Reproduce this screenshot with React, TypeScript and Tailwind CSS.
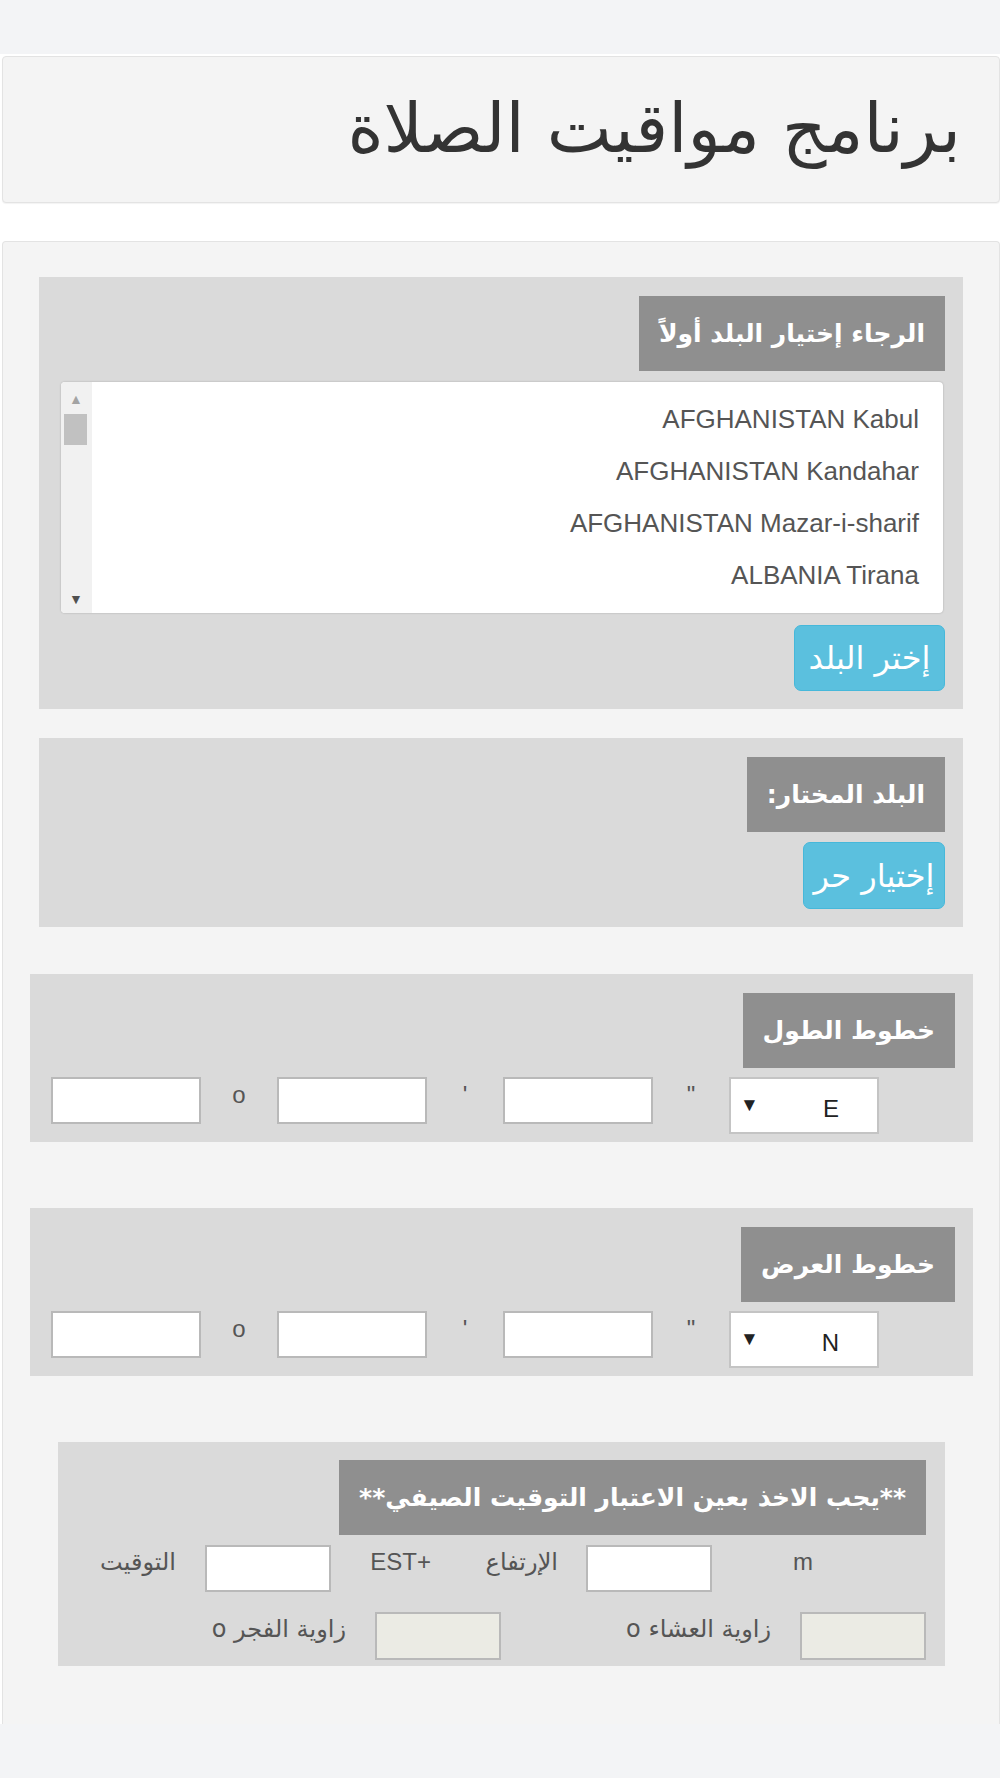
import React from 'react';

const arFont = "font-['DejaVu_Sans',sans-serif]";
const latFont = "font-['Liberation_Sans',Arial,sans-serif]";

const Label = ({ text }: { text: string }) => (
  <div className={`inline-flex h-[75px] items-center bg-[#8f8f8f] px-[20px] text-[25px] font-bold text-white ${arFont}`}>
    {text}
  </div>
);

const InfoButton = ({ text, w, h }: { text: string; w: string; h: string }) => (
  <button className={`${w} ${h} rounded-[7px] border border-[#46b8da] bg-[#5bc0de] text-[32px] text-white ${arFont}`}>
    {text}
  </button>
);

const Field = ({ disabled = false, w = 'w-[150px]', h = 'h-[47px]' }: { disabled?: boolean; w?: string; h?: string }) => (
  <div className={`${w} ${h} shrink-0 border-2 border-[#b9b9b9] ${disabled ? 'bg-[#ebebe4]' : 'bg-white'}`} />
);

const Sym = ({ s }: { s: string }) => (
  <div className={`w-[76px] shrink-0 text-center text-[24px] leading-[36px] text-[#555] ${latFont}`}>{s}</div>
);

const Compass = ({ dir }: { dir: string }) => (
  <div className={`relative h-[57px] w-[150px] shrink-0 border-2 border-[#c4c4c4] bg-white ${latFont}`}>
    <span className="absolute left-[9px] top-[12px] text-[19px] text-[#222]">▼</span>
    <span className="absolute right-[38px] top-[12px] text-[24px] text-[#222]">{dir}</span>
  </div>
);

const CoordPanel = ({ title, dir, mt }: { title: string; dir: string; mt: string }) => (
  <div className={`ml-[27px] mr-[26px] ${mt} bg-[#dadada] pb-[8px] pr-[18px] pt-[19px]`}>
    <div className="flex">
      <Label text={title} />
    </div>
    <div className="mt-[9px] flex items-start pr-[76px]">
      <Compass dir={dir} />
      <Sym s={'"'} />
      <Field />
      <Sym s="'" />
      <Field />
      <Sym s="o" />
      <Field />
    </div>
  </div>
);

const cities = ['AFGHANISTAN Kabul', 'AFGHANISTAN Kandahar', 'AFGHANISTAN Mazar-i-sharif', 'ALBANIA Tirana'];

export default function App() {
  return (
    <div className="min-h-[1778px] bg-[#f3f4f6] pt-[54px]">
      <div dir="rtl" className="bg-white pt-[2px]">
        {/* header */}
        <div className="flex h-[147px] w-[998px] items-center rounded-[4px] border border-[#e3e3e3] bg-[#f4f4f4] pr-[38px] shadow-[0_1px_1px_rgba(0,0,0,0.05)]">
          <h1 className={`pb-[2px] text-[69px] font-normal text-[#333] ${arFont}`}>برنامج مواقيت الصلاة</h1>
        </div>

        {/* main card */}
        <div className="mt-[38px] h-[1483px] w-[998px] rounded-t-[4px] border border-b-0 border-[#e3e3e3] bg-[#f4f4f4] pt-[35px]">
          {/* country list */}
          <div className="mx-[36px] bg-[#dadada] pb-[18px] pl-[22px] pr-[18px] pt-[19px]">
            <div className="flex">
              <Label text="الرجاء إختيار البلد أولاً" />
            </div>
            <div className="mt-[11px] mr-[2px] flex h-[231px] overflow-hidden rounded-[4px] bg-white shadow-[0_0_2px_rgba(0,0,0,0.25)]">
              <div className={`flex-1 pr-[24px] pt-[11px] text-[26px] leading-[52px] text-[#555] ${latFont}`}>
                {cities.map((c) => (
                  <div key={c} dir="ltr" className="text-right">{c}</div>
                ))}
              </div>
              <div className="relative w-[31px] shrink-0 bg-[#f1f1f1]">
                <span className="absolute left-[8px] top-[6px] text-[14px] text-[#a3a3a3]">▲</span>
                <div className="absolute left-[3px] top-[32px] h-[31px] w-[23px] bg-[#c1c1c1]" />
                <span className="absolute bottom-[4px] left-[8px] text-[14px] text-[#505050]">▼</span>
              </div>
            </div>
            <div className="mt-[12px] flex">
              <InfoButton text="إختر البلد" w="w-[151px]" h="h-[66px]" />
            </div>
          </div>

          {/* selected country */}
          <div className="mx-[36px] mt-[29px] bg-[#dadada] pb-[18px] pr-[18px] pt-[19px]">
            <div className="flex">
              <Label text="البلد المختار:" />
            </div>
            <div className="mt-[10px] flex">
              <InfoButton text="إختيار حر" w="w-[142px]" h="h-[67px]" />
            </div>
          </div>

          <CoordPanel title="خطوط الطول" dir="E" mt="mt-[47px]" />
          <CoordPanel title="خطوط العرض" dir="N" mt="mt-[66px]" />

          {/* timezone / angles */}
          <div className="ml-[55px] mr-[54px] mt-[66px] bg-[#dadada] pb-[6px] pr-[19px] pt-[18px]">
            <div className="flex">
              <Label text="**يجب الاخذ بعين الاعتبار التوقيت الصيفي**" />
            </div>
            <div className="mt-[10px] flex items-start text-[24px] leading-[34px] text-[#555]">
              <div className={`mr-[113px] w-[19px] shrink-0 text-center ${latFont}`}>m</div>
              <div className="mr-[82px]"><Field w="w-[126px]" /></div>
              <div className={`mr-[28px] w-[80px] shrink-0 whitespace-nowrap ${arFont}`}>الإرتفاع</div>
              <div dir="ltr" className={`mr-[47px] w-[65px] shrink-0 whitespace-nowrap text-right ${latFont}`}>EST+</div>
              <div className="mr-[35px]"><Field w="w-[126px]" /></div>
              <div className={`mr-[29px] w-[87px] shrink-0 whitespace-nowrap ${arFont}`}>التوقيت</div>
            </div>
            <div className="mt-[20px] flex items-start text-[24px] leading-[34px] text-[#555]">
              <Field disabled w="w-[126px]" h="h-[48px]" />
              <div className={`mr-[29px] w-[166px] shrink-0 whitespace-nowrap ${arFont}`}>زاوية العشاء o</div>
              <div className="mr-[104px]"><Field disabled w="w-[126px]" h="h-[48px]" /></div>
              <div className={`mr-[29px] w-[145px] shrink-0 whitespace-nowrap ${arFont}`}>زاوية الفجر o</div>
            </div>
          </div>
        </div>
      </div>
    </div>
  );
}
